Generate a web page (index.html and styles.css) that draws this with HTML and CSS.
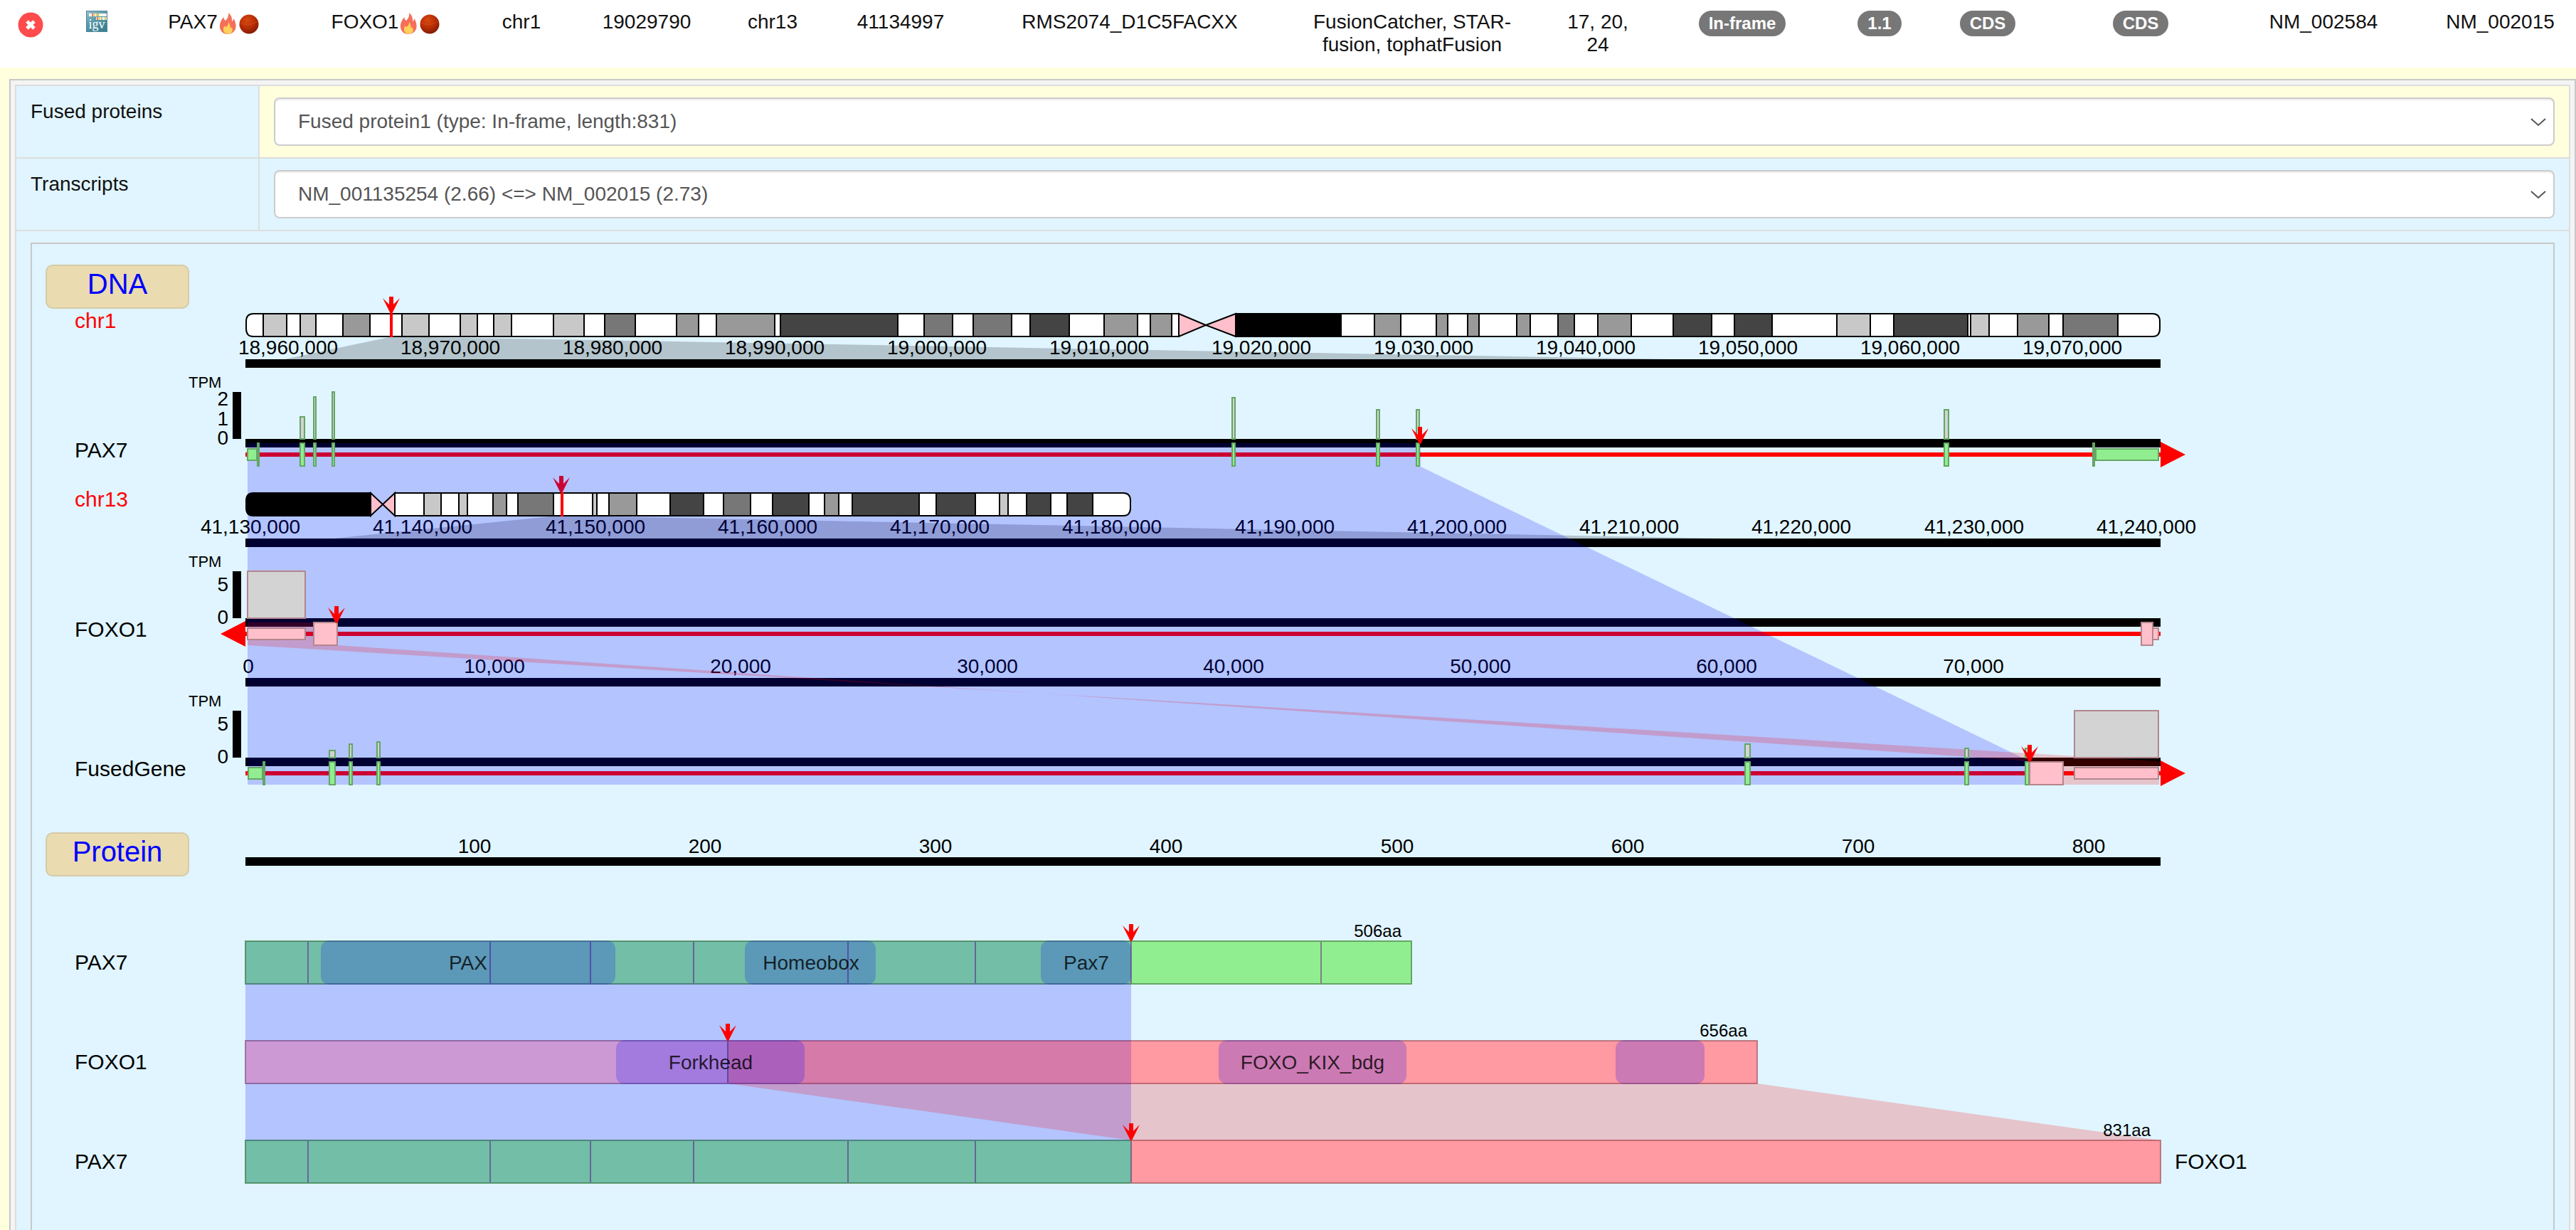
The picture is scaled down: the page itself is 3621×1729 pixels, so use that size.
FILE: index.html
```html
<!DOCTYPE html>
<html lang="en">
<head>
<meta charset="utf-8">
<title>PAX7 - FOXO1 fusion</title>
<link rel="stylesheet" href="styles.css">
</head>
<body>
<svg class="defs" width="0" height="0" aria-hidden="true">
  <defs>
    <radialGradient id="ball-fill" cx="0.4" cy="0.3" r="0.75">
      <stop offset="0" stop-color="#d9480f"/>
      <stop offset="0.55" stop-color="#b52c06"/>
      <stop offset="1" stop-color="#7d1a04"/>
    </radialGradient>
    <linearGradient id="igv-fill" x1="0" y1="0" x2="0.6" y2="1">
      <stop offset="0" stop-color="#9fc3cf"/>
      <stop offset="0.5" stop-color="#5a9aab"/>
      <stop offset="1" stop-color="#3c8093"/>
    </linearGradient>
    <symbol id="fire" viewBox="0 0 28 30">
      <path fill="#f4705a" d="M15 0C16 5 13 9 11 11C9 10 8.500 8 8.500 6C4 11 2.500 16 3 20C3.500 26 8 30 14 30C20 30 25 26 25.500 20C26 15 24 11 22.500 8C22 10 21.500 11 20 12C20.500 7 19 3 15 0Z"/>
      <path fill="#ffd05a" d="M15 13C15.500 17 12.500 19 11.500 20C10.500 19.500 10 19 10 18C8 20 7 24 9 27C10.500 30 18 31 20 27C22 24 20 21 19 20C18.500 21 18 21.500 17.500 21.500C18 18 17 15 15 13Z"/>
    </symbol>
    <symbol id="ball" viewBox="0 0 28 28">
      <circle cx="14" cy="14" r="13.500" fill="url(#ball-fill)"/>
      <path d="M2 12Q14 18 26 10" fill="none" stroke="#e2631f" stroke-opacity="0.25" stroke-width="2"/>
    </symbol>
    <path id="arrow" fill="#f00" d="M-3-24H3V-13L12-22L1 0H-1L-12-22L-3-13Z"/>
  </defs>
</svg>

<table class="fusion-row">
  <colgroup>
    <col class="c1"><col class="c2"><col class="c3"><col class="c4"><col class="c5"><col class="c6"><col class="c7"><col class="c8"><col class="c9"><col class="c10"><col class="c11"><col class="c12"><col class="c13"><col class="c14"><col class="c15"><col class="c16"><col class="c17">
  </colgroup>
  <tbody>
    <tr>
      <td>
        <button class="close" type="button" aria-label="Close details">
          <svg viewBox="0 0 36 36" width="36" height="36"><circle cx="18" cy="18" r="17.500" fill="#ff4b4b"/><path d="M13 13L23 23M23 13L13 23" stroke="#fff" stroke-width="5"/></svg>
        </button>
      </td>
      <td>
        <a class="igv" href="#igv" aria-label="Open in IGV">
          <svg viewBox="0 0 30 30" width="30" height="30">
            <rect width="30" height="30" fill="url(#igv-fill)"/>
            <rect x="0.500" y="0.500" width="29" height="29" fill="none" stroke="#4b8495"/>
            <path d="M4 6H29M14 11H29" stroke="#f7f5ea" stroke-width="4"/>
            <path d="M9 4V8M16 9V13" stroke="#e2573c" stroke-width="1.500"/>
            <path d="M11.500 4V8M15 4V8M18.500 9V13M27 9V13" stroke="#e9b93c" stroke-width="1.500"/>
            <path d="M17 4V8M22 9V13" stroke="#8dc06a" stroke-width="1.500"/>
            <text x="15" y="25" class="igv-text">igv</text>
          </svg>
        </a>
      </td>
      <td>PAX7<svg class="mark fire" width="28" height="30"><use href="#fire"/></svg><svg class="mark ball" width="28" height="28"><use href="#ball"/></svg></td>
      <td>FOXO1<svg class="mark fire" width="28" height="30"><use href="#fire"/></svg><svg class="mark ball" width="28" height="28"><use href="#ball"/></svg></td>
      <td>chr1</td>
      <td>19029790</td>
      <td>chr13</td>
      <td>41134997</td>
      <td>RMS2074_D1C5FACXX</td>
      <td>FusionCatcher, STAR-fusion, tophatFusion</td>
      <td>17, 20, 24</td>
      <td><span class="badge">In-frame</span></td>
      <td><span class="badge">1.1</span></td>
      <td><span class="badge">CDS</span></td>
      <td><span class="badge">CDS</span></td>
      <td>NM_002584</td>
      <td>NM_002015</td>
    </tr>
  </tbody>
</table>

<main class="details">
  <div class="frame">
    <div class="form">
      <div class="field">
        <label for="proteins">Fused proteins</label>
        <div class="control highlight">
          <div class="select">
            <select id="proteins"><option>Fused protein1 (type: In-frame, length:831)</option></select>
            <svg viewBox="0 0 22 12" width="22" height="12"><path d="M1 1L11 10L21 1"/></svg>
          </div>
        </div>
      </div>
      <div class="field">
        <label for="transcripts">Transcripts</label>
        <div class="control">
          <div class="select">
            <select id="transcripts"><option>NM_001135254 (2.66) &lt;=&gt; NM_002015 (2.73)</option></select>
            <svg viewBox="0 0 22 12" width="22" height="12"><path d="M1 1L11 10L21 1"/></svg>
          </div>
        </div>
      </div>
      <div class="plot">
        <svg class="diagram" viewBox="45 343 3544 1386">
          <foreignObject x="64" y="372" width="202" height="62"><button class="section" type="button">DNA</button></foreignObject>
          <foreignObject x="64" y="1170" width="202" height="62"><button class="section" type="button">Protein</button></foreignObject>

          <!-- genomic axes -->
          <g class="tick">
            <text x="405" y="498">18,960,000</text><text x="633" y="498">18,970,000</text><text x="861" y="498">18,980,000</text><text x="1089" y="498">18,990,000</text><text x="1317" y="498">19,000,000</text><text x="1545" y="498">19,010,000</text><text x="1773" y="498">19,020,000</text><text x="2001" y="498">19,030,000</text><text x="2229" y="498">19,040,000</text><text x="2457" y="498">19,050,000</text><text x="2685" y="498">19,060,000</text><text x="2913" y="498">19,070,000</text>
            <text x="352" y="750">41,130,000</text><text x="594" y="750">41,140,000</text><text x="837" y="750">41,150,000</text><text x="1079" y="750">41,160,000</text><text x="1321" y="750">41,170,000</text><text x="1563" y="750">41,180,000</text><text x="1806" y="750">41,190,000</text><text x="2048" y="750">41,200,000</text><text x="2290" y="750">41,210,000</text><text x="2532" y="750">41,220,000</text><text x="2775" y="750">41,230,000</text><text x="3017" y="750">41,240,000</text>
            <text x="349" y="946">0</text><text x="695" y="946">10,000</text><text x="1041" y="946">20,000</text><text x="1388" y="946">30,000</text><text x="1734" y="946">40,000</text><text x="2081" y="946">50,000</text><text x="2427" y="946">60,000</text><text x="2774" y="946">70,000</text>
            <text x="667" y="1199">100</text><text x="991" y="1199">200</text><text x="1315" y="1199">300</text><text x="1639" y="1199">400</text><text x="1964" y="1199">500</text><text x="2288" y="1199">600</text><text x="2612" y="1199">700</text><text x="2936" y="1199">800</text>
          </g>
          <path class="shade" d="M547 474H603L2350 505H400Z"/>
          <path class="shade" d="M775 726H848L2420 757H469Z"/>
          <path class="axis" d="M345 511H3037M345 623H3037M345 763H3037M345 875H3037M345 959H3037M345 1071H3037M345 1211H3037"/>
          <path class="gene-line" d="M345 639H3037M345 891H3037M345 1087H3037"/>
          <path class="strand" d="M3037 621L3072 639L3037 657ZM345 873L310 891L345 909ZM3037 1069L3072 1087L3037 1105Z"/>

          <!-- expression scales -->
          <path class="scale" d="M333 551V617M333 803V869M333 999V1065"/>
          <g class="scale-title"><text x="265" y="545">TPM</text><text x="265" y="797">TPM</text><text x="265" y="993">TPM</text></g>
          <g class="scale-tick"><text x="321" y="570">2</text><text x="321" y="598">1</text><text x="321" y="625">0</text><text x="321" y="831">5</text><text x="321" y="877">0</text><text x="321" y="1027">5</text><text x="321" y="1073">0</text></g>

          <use href="#arrow" x="789" y="693"/>

          <!-- protein bars -->
          <g class="pax-bar"><rect x="345" y="1323" width="1639" height="60"/><rect x="345" y="1603" width="1245" height="60"/></g>
          <g class="foxo-bar"><rect x="345" y="1463" width="2125" height="60"/><rect x="1590" y="1603" width="1447" height="60"/></g>
          <path class="junction" d="M433 1324V1382M689 1324V1382M830 1324V1382M975 1324V1382M1192 1324V1382M1371 1324V1382M1590 1324V1382M1857 1324V1382M1023 1464V1522M433 1604V1662M689 1604V1662M830 1604V1662M975 1604V1662M1192 1604V1662M1371 1604V1662M1590 1604V1662"/>

          <!-- regions kept in the fused product -->
          <path class="from-pax" d="M348 623H1997V656L2853 1070V1103H348Z"/>
          <path class="from-foxo" d="M348 875H474V907L2853 1070V1103H3035V1070L348 907Z"/>
          <path class="from-pax" d="M345 1323H1590V1663H345Z"/>
          <path class="from-foxo" d="M1023 1463H2470V1523L3037 1603V1663H1590V1603L1023 1523Z"/>

          <!-- protein domains -->
          <g class="domain"><rect x="451" y="1322" width="414" height="62" rx="12"/><rect x="1047" y="1322" width="184" height="62" rx="12"/><rect x="1463" y="1322" width="127" height="62" rx="12"/><rect x="866" y="1462" width="265" height="62" rx="12"/><rect x="1713" y="1462" width="264" height="62" rx="12"/><rect x="2271" y="1462" width="125" height="62" rx="12"/></g>
          <g class="domain-name"><text x="658" y="1363">PAX</text><text x="1140" y="1363">Homeobox</text><text x="1527" y="1363">Pax7</text><text x="999" y="1503">Forkhead</text><text x="1845" y="1503">FOXO_KIX_bdg</text></g>

          <!-- chromosome 1 -->
          <path class="arm" d="M1657 441H356Q346 441 346 452V462Q346 473 356 473H1657ZM1737 441H3026Q3036 441 3036 452V462Q3036 473 3026 473H1737Z"/>
          <g class="b25"><rect x="370" y="441" width="33" height="32"/><rect x="422" y="441" width="22" height="32"/><rect x="565" y="441" width="38" height="32"/><rect x="647" y="441" width="24" height="32"/><rect x="694" y="441" width="25" height="32"/><rect x="778" y="441" width="43" height="32"/><rect x="2582" y="441" width="47" height="32"/><rect x="2770" y="441" width="26" height="32"/></g>
          <g class="b50"><rect x="482" y="441" width="38" height="32"/><rect x="951" y="441" width="31" height="32"/><rect x="1007" y="441" width="82" height="32"/><rect x="1552" y="441" width="47" height="32"/><rect x="1617" y="441" width="30" height="32"/><rect x="1932" y="441" width="37" height="32"/><rect x="2019" y="441" width="16" height="32"/><rect x="2063" y="441" width="16" height="32"/><rect x="2132" y="441" width="19" height="32"/><rect x="2246" y="441" width="47" height="32"/><rect x="2836" y="441" width="44" height="32"/></g>
          <g class="b75"><rect x="850" y="441" width="43" height="32"/><rect x="1299" y="441" width="40" height="32"/><rect x="1368" y="441" width="54" height="32"/><rect x="2190" y="441" width="23" height="32"/><rect x="2900" y="441" width="77" height="32"/></g>
          <g class="b90"><rect x="1097" y="441" width="165" height="32"/><rect x="1448" y="441" width="55" height="32"/><rect x="2352" y="441" width="54" height="32"/><rect x="2438" y="441" width="53" height="32"/><rect x="2662" y="441" width="104" height="32"/></g>
          <rect class="b100" x="1737" y="441" width="148" height="32"/>
          <path class="centromere" d="M1657 441L1695 457L1657 473ZM1737 441L1695 457L1737 473Z"/>

          <!-- chromosome 13 -->
          <path class="b100" d="M521 693H356Q346 693 346 704V714Q346 725 356 725H521Z"/>
          <path class="arm" d="M555 693H1579Q1589 693 1589 704V714Q1589 725 1579 725H555Z"/>
          <g class="b25"><rect x="596" y="693" width="24" height="32"/><rect x="645" y="693" width="12" height="32"/><rect x="833" y="693" width="6" height="32"/><rect x="1405" y="693" width="12" height="32"/></g>
          <g class="b50"><rect x="693" y="693" width="19" height="32"/><rect x="856" y="693" width="39" height="32"/><rect x="1159" y="693" width="20" height="32"/></g>
          <g class="b75"><rect x="728" y="693" width="50" height="32"/><rect x="1017" y="693" width="38" height="32"/></g>
          <g class="b90"><rect x="942" y="693" width="47" height="32"/><rect x="1086" y="693" width="51" height="32"/><rect x="1198" y="693" width="94" height="32"/><rect x="1316" y="693" width="55" height="32"/><rect x="1443" y="693" width="34" height="32"/><rect x="1500" y="693" width="36" height="32"/></g>
          <path class="centromere" d="M521 693L538 709L521 725ZM555 693L538 709L555 725Z"/>
          <path class="break" d="M550 440V474M790 692V726"/>

          <!-- PAX7 exons -->
          <g class="pax-tpm"><rect x="422" y="586" width="6" height="31"/><rect x="441" y="558" width="3" height="59"/><rect x="467" y="551" width="3" height="66"/><rect x="1732" y="559" width="4" height="58"/><rect x="1935" y="576" width="4" height="41"/><rect x="1991" y="576" width="4" height="41"/><rect x="2733" y="576" width="6" height="41"/></g>
          <g class="pax-exon"><rect x="348" y="631" width="13" height="16"/><rect x="362" y="623" width="2" height="32"/><rect x="422" y="623" width="6" height="32"/><rect x="441" y="623" width="3" height="32"/><rect x="467" y="623" width="3" height="32"/><rect x="1732" y="623" width="4" height="32"/><rect x="1935" y="623" width="4" height="32"/><rect x="1991" y="623" width="4" height="32"/><rect x="2733" y="623" width="6" height="32"/><rect x="2942" y="623" width="2" height="32"/><rect x="2946" y="631" width="88" height="16"/></g>
          <!-- FOXO1 exons -->
          <rect class="foxo-tpm" x="348" y="803" width="81" height="66"/>
          <g class="foxo-exon"><rect x="348" y="883" width="81" height="16"/><rect x="441" y="875" width="33" height="32"/><rect x="3026" y="883" width="8" height="16"/><rect x="3010" y="875" width="16" height="32"/></g>
          <!-- fused gene exons -->
          <g class="pax-tpm"><rect x="463" y="1055" width="8" height="10"/><rect x="491" y="1046" width="4" height="19"/><rect x="530" y="1043" width="4" height="22"/><rect x="2453" y="1046" width="7" height="19"/><rect x="2762" y="1052" width="5" height="13"/><rect x="2847" y="1052" width="5" height="13"/></g>
          <g class="pax-exon"><rect x="349" y="1079" width="20" height="16"/><rect x="370" y="1071" width="2" height="32"/><rect x="463" y="1071" width="8" height="32"/><rect x="491" y="1071" width="4" height="32"/><rect x="530" y="1071" width="4" height="32"/><rect x="2453" y="1071" width="7" height="32"/><rect x="2762" y="1071" width="5" height="32"/><rect x="2847" y="1071" width="5" height="32"/></g>
          <rect class="foxo-tpm" x="2916" y="999" width="118" height="66"/>
          <g class="foxo-exon"><rect x="2853" y="1071" width="47" height="32"/><rect x="2916" y="1079" width="118" height="16"/></g>

          <use href="#arrow" x="550" y="441"/><use href="#arrow" x="1996" y="624"/><use href="#arrow" x="473" y="876"/><use href="#arrow" x="2853" y="1071"/>
          <use href="#arrow" x="1590" y="1323"/><use href="#arrow" x="1023" y="1463"/><use href="#arrow" x="1590" y="1603"/>

          <g class="name chrom"><text x="105" y="461">chr1</text><text x="105" y="712">chr13</text></g>
          <g class="name"><text x="105" y="643">PAX7</text><text x="105" y="895">FOXO1</text><text x="105" y="1091">FusedGene</text><text x="105" y="1363">PAX7</text><text x="105" y="1503">FOXO1</text><text x="105" y="1643">PAX7</text><text x="3057" y="1643">FOXO1</text></g>
          <g class="length"><text x="1970" y="1317">506aa</text><text x="2456" y="1457">656aa</text><text x="3023" y="1597">831aa</text></g>
        </svg>
      </div>
    </div>
  </div>
</main>
</body>
</html>
```
FILE: styles.css
```css
body {
  margin: 0;
  background: #fff;
  color: #111;
  font: 28px/32px "Liberation Sans", Arial, sans-serif;
}

button, select {
  font: inherit;
  color: inherit;
}

.defs {
  position: absolute;
}

/* result row */
.fusion-row {
  width: 100%;
  table-layout: fixed;
  border-collapse: collapse;
}

.fusion-row td {
  padding: 15px 16px 16px;
  text-align: center;
  vertical-align: top;
}

.fusion-row td:last-child {
  padding-right: 8px;
}

.c1 { width: 86px; }
.c2 { width: 100px; }
.c3 { width: 228px; }
.c4 { width: 256px; }
.c5 { width: 126px; }
.c6 { width: 226px; }
.c7 { width: 128px; }
.c8 { width: 232px; }
.c9 { width: 412px; }
.c10 { width: 382px; }
.c11 { width: 140px; }
.c12 { width: 266px; }
.c13 { width: 120px; }
.c14 { width: 184px; }
.c15 { width: 246px; }
.c16 { width: 268px; }
.c17 { width: 221px; }

.close {
  display: block;
  margin: 2px auto 0;
  padding: 0;
  border: 0;
  background: none;
  cursor: pointer;
}

.close svg, .igv svg {
  display: block;
}

.igv {
  display: block;
  width: 30px;
  margin: 0 auto;
}

.igv-text {
  font: 18px "Liberation Serif", "Times New Roman", serif;
  fill: #fff;
  text-anchor: middle;
}

.mark {
  vertical-align: top;
}

.fire {
  margin-top: 3px;
}

.ball {
  margin: 5px 0 0 2px;
}

.badge {
  display: inline-block;
  padding: 6px 14px;
  border-radius: 18px;
  background: #777;
  color: #fff;
  font-size: 24px;
  line-height: 24px;
  font-weight: bold;
  vertical-align: top;
}

/* detail pane */
.details {
  padding: 16px 0 0 13px;
  background: #ffffdd;
}

.frame {
  padding: 6px 6px 0;
  border: 2px solid #c8c8c8;
  border-bottom: 0;
  background: #f4f4f4;
}

.form {
  border: 2px solid #ddd;
  border-bottom: 0;
  background: #e0f5ff;
}

.field {
  display: grid;
  grid-template-columns: 340px 1fr;
  border-bottom: 2px solid #ddd;
}

.field label {
  padding: 20px;
}

.control {
  padding: 16px 20px;
  border-left: 2px solid #ddd;
}

.highlight {
  background: #ffffdd;
}

.select {
  position: relative;
}

.select select {
  display: block;
  box-sizing: border-box;
  width: 100%;
  height: 68px;
  padding: 0 32px;
  border: 2px solid #ccc;
  border-radius: 8px;
  background: #fff;
  box-shadow: inset 0 2px 2px rgba(0, 0, 0, 0.075);
  color: #555;
  appearance: none;
}

.select svg {
  position: absolute;
  top: 29px;
  right: 12px;
  fill: none;
  stroke: #555;
  stroke-width: 2px;
  pointer-events: none;
}

.plot {
  margin: 16px 20px 0;
  border: 2px solid #c8c8c8;
  border-bottom: 0;
}

/* diagram */
.diagram {
  display: block;
  width: 100%;
  height: auto;
}

.section {
  display: block;
  box-sizing: border-box;
  width: 100%;
  height: 62px;
  padding: 0 0 8px;
  border: 2px solid #d5cba8;
  border-radius: 10px;
  background: #eadcb0;
  color: #00f;
  font-size: 40px;
}

.tick, .domain-name {
  font-size: 28px;
  text-anchor: middle;
}

.scale-tick {
  font-size: 28px;
  text-anchor: end;
}

.scale-title {
  font-size: 22px;
}

.length {
  font-size: 24px;
  text-anchor: end;
}

.name {
  font-size: 30px;
}

.tick, .scale-tick, .scale-title, .length, .name {
  fill: #000;
}

.name.chrom {
  fill: #f00;
}

.domain-name {
  fill: #000;
  fill-opacity: 0.8;
}

.shade {
  fill: #000;
  fill-opacity: 0.2;
}

.axis, .scale {
  stroke: #000;
  stroke-width: 12px;
}

.gene-line {
  stroke: #f00;
  stroke-width: 6px;
}

.strand {
  fill: #f00;
}

.from-pax, .domain {
  fill: #00f;
  fill-opacity: 0.2;
}

.from-foxo {
  fill: #f00;
  fill-opacity: 0.2;
}

.pax-bar, .pax-exon {
  fill: #90ee90;
  stroke: #64a664;
  stroke-width: 2px;
}

.foxo-bar, .foxo-exon {
  fill: #ffc0cb;
  stroke: #b3868e;
  stroke-width: 2px;
}

.pax-tpm {
  fill: #d3d3d3;
  stroke: #64a664;
  stroke-width: 2px;
}

.foxo-tpm {
  fill: #d3d3d3;
  stroke: #b3868e;
  stroke-width: 2px;
}

.junction {
  stroke: #808080;
  stroke-width: 2px;
}

.arm, .b25, .b50, .b75, .b90, .b100, .centromere {
  stroke: #000;
  stroke-width: 2px;
}

.arm { fill: #fff; }
.b25 { fill: #c8c8c8; }
.b50 { fill: #999; }
.b75 { fill: #777; }
.b90 { fill: #444; }
.b100 { fill: #000; }
.centromere { fill: #ffc0cb; }

.break {
  stroke: #f00;
  stroke-width: 4px;
}
```
